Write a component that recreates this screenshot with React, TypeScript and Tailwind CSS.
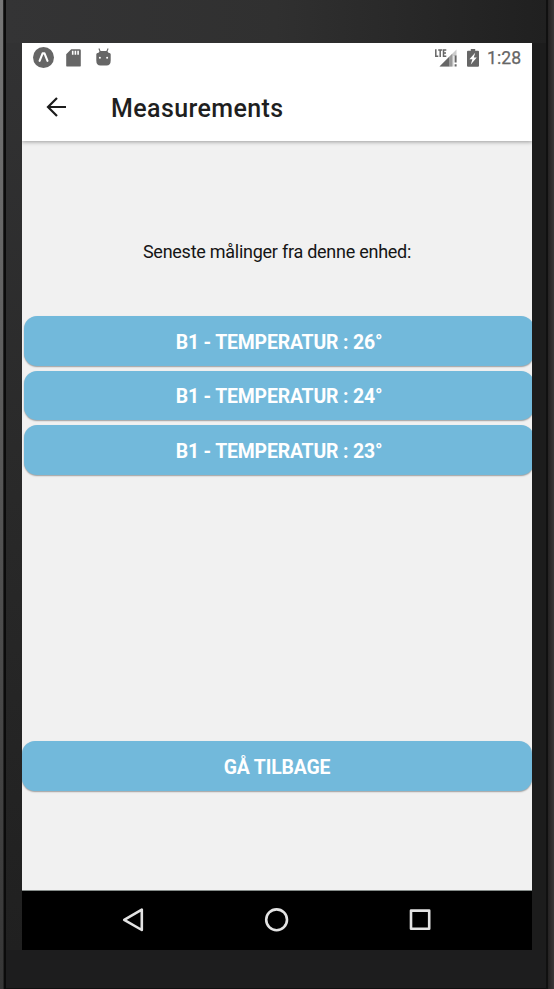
const readings = ['26', '24', '23'];

function StatusBar() {
  return (
    <div className="flex h-[30px] shrink-0 items-center justify-between pl-[11px] pr-[11px] text-[#666666]">
      <div className="flex items-center">
        <svg className="-mt-px" width="21" height="21" viewBox="0 0 21 21">
          <circle cx="10.5" cy="10.5" r="10.5" fill="currentColor" />
          <path d="M6.6 13.8 L9.6 6.4 H11.5 L14.5 13.8" fill="none" stroke="#fff" strokeWidth="2.1" strokeLinejoin="round" strokeLinecap="round" />
        </svg>
        <svg className="-mt-px ml-3" width="15" height="18" viewBox="0 0 15 18">
          <path d="M5.2 0.2 H13.6 Q14.8 0.2 14.8 1.4 V16.4 Q14.8 17.6 13.6 17.6 H1.4 Q0.2 17.6 0.2 16.4 V5.3 Z" fill="currentColor" />
          <path d="M6.7 1.8 V5.8 M9.4 1.8 V5.8 M12.1 1.8 V5.8" stroke="#fff" strokeWidth="1.6" />
        </svg>
        <svg className="-mt-[3px] ml-[15px]" width="15" height="18" viewBox="0 0 15 18">
          <path d="M2.9 0.5 L4.4 4 M12.1 0.5 L10.6 4" stroke="currentColor" strokeWidth="1.1" />
          <path d="M0.3 6.2 Q0.3 5.2 2.5 4.8 L4 3 H11 L12.5 4.8 Q14.7 5.2 14.7 6.2 V12.5 Q14.7 17.6 10.5 17.6 H4.5 Q0.3 17.6 0.3 12.5 Z" fill="currentColor" />
          <circle cx="3.9" cy="9.8" r="1" fill="#fff" />
          <circle cx="11.1" cy="9.8" r="1" fill="#fff" />
        </svg>
      </div>
      <div className="flex items-center">
        <svg className="-mt-px" width="23" height="20" viewBox="0 0 23 20">
          <path d="M4.5 18.5 L21.5 1.5 V8 H18.5 V18.5 Z" fill="#cccccc" />
          <path d="M4.5 18.5 L14.5 8.5 V18.5 Z" fill="#666666" />
          <path d="M14.5 8.5 L17.3 5.7 V18.5 H14.5 Z" fill="#999999" />
          <path d="M0.7 1.5 V8.3 H3.5 M3.4 2.2 H7.4 M5.4 2.2 V9 M11.3 2.2 H8.6 V8.3 H11.3 M8.6 5.2 H11" stroke="#fff" strokeWidth="3.4" fill="none" />
          <path d="M0.8 1.2 V8.2 H3.3 M3.2 1.9 H7.2 M5.2 1.9 V9 M11.3 1.9 H8.5 V8.2 H11.3 M8.5 5.1 H11" stroke="#666666" strokeWidth="1.5" fill="none" />
          <path d="M20.6 7.5 V14.5 M20.6 16.2 V18.5" stroke="#666666" strokeWidth="2" />
        </svg>
        <svg className="-mt-px ml-[9px]" width="12" height="18" viewBox="0 0 12 18">
          <path d="M3.8 0 H8.2 V1.8 H11 Q12 1.8 12 2.8 V16.8 Q12 17.8 11 17.8 H1 Q0 17.8 0 16.8 V2.8 Q0 1.8 1 1.8 H3.8 Z" fill="currentColor" />
          <path d="M8.2 3.8 L2.4 10.2 H5.4 L3.8 15.4 L9.8 8.6 H6.8 Z" fill="#fff" />
        </svg>
        <span className="ml-[8px] w-[34px] whitespace-nowrap text-[17.6px] leading-5 tracking-[0.1px] [-webkit-text-stroke:0.25px_#666666]">1:28</span>
      </div>
    </div>
  );
}

function Header() {
  return (
    <header className="z-10 flex h-[98px] shrink-0 flex-col bg-white shadow-[0_1px_4px_rgba(0,0,0,0.36)]">
      <StatusBar />
      <div className="flex h-[68px] items-center">
        <svg className="ml-6" width="20" height="20" viewBox="0 0 20 20" fill="none" stroke="#1c1c1c" strokeWidth="2.2">
          <path d="M20 10 H2 M11 1 L2 10 L11 19" />
        </svg>
        <h1 className="ml-[45px] pt-[3px] text-[25px] font-medium leading-8 tracking-[0.4px] text-[#1f1f1f]">Measurements</h1>
      </div>
    </header>
  );
}

const buttonClass =
  'flex h-[49.5px] shrink-0 items-center justify-center rounded-[13px] bg-[#72b9db] pt-[3px] text-[19.4px] tracking-[-0.16px] font-bold text-white shadow-[0_1px_1.5px_rgba(0,0,0,0.35)]';

export default function App() {
  return (
    <div className="flex h-[989px] w-[554px] overflow-hidden bg-[#1d1d1e] font-[Roboto,sans-serif]">
      <div className="w-[3px] shrink-0 bg-linear-to-b from-[#777777] via-[#555555] to-[#363636]" />
      <div className="w-[1px] shrink-0 bg-[#242424]" />
      <div className="w-[2px] shrink-0 bg-[#0b0b0b]" />
      <div className="flex w-[540px] shrink-0 flex-col bg-[#1d1d1e]">
        <div className="h-[43px] shrink-0 bg-linear-to-r from-[#343435] via-[#303030] to-[#202020]" />
        <div className="flex">
          <div className="w-[16px] shrink-0 bg-linear-to-b from-[#323233] via-[#292929] to-[#202020]" />
          <main className="flex h-[907px] w-[510px] shrink-0 flex-col overflow-hidden bg-[#f1f1f1]">
            <Header />
            <section className="flex grow flex-col">
              <p className="mt-[99px] text-center text-[18px] leading-6 tracking-[-0.26px] text-[#151515]">Seneste målinger fra denne enhed:</p>
              <div className="ml-[2px] mt-[52px] flex w-[510px] flex-col gap-[5px]">
                {readings.map((value) => (
                  <button key={value} className={buttonClass}>B1 - TEMPERATUR : {value}°</button>
                ))}
              </div>
              <button className={`${buttonClass} mt-[266.5px] w-full`}>GÅ TILBAGE</button>
            </section>
            <nav className="flex h-[60.5px] shrink-0 items-center justify-between border-t border-[#858b89] bg-black pl-[100px] pr-[101px]">
              <svg width="22" height="26" viewBox="0 0 22 26" fill="none" stroke="#e3e3e3" strokeWidth="2.6" strokeLinejoin="round">
                <path d="M19.8 2.6 V23 L2.2 12.8 Z" />
              </svg>
              <svg width="26" height="26" viewBox="0 0 26 26" fill="none" stroke="#e3e3e3" strokeWidth="2.6">
                <circle cx="12.6" cy="12.8" r="10.4" />
              </svg>
              <svg width="22" height="22" viewBox="0 0 22 22" fill="none" stroke="#e3e3e3" strokeWidth="2.6" strokeLinejoin="round">
                <rect x="2" y="1.6" width="18.2" height="18.2" />
              </svg>
            </nav>
          </main>
          <div className="w-[14px] shrink-0 bg-[#1c1c1c]" />
        </div>
        <div className="grow border-b border-[#101010] bg-[#1d1d1e]" />
      </div>
      <div className="w-[2px] shrink-0 bg-[#101010]" />
      <div className="grow bg-linear-to-r from-[#242222] to-[#3b3839]" />
    </div>
  );
}
